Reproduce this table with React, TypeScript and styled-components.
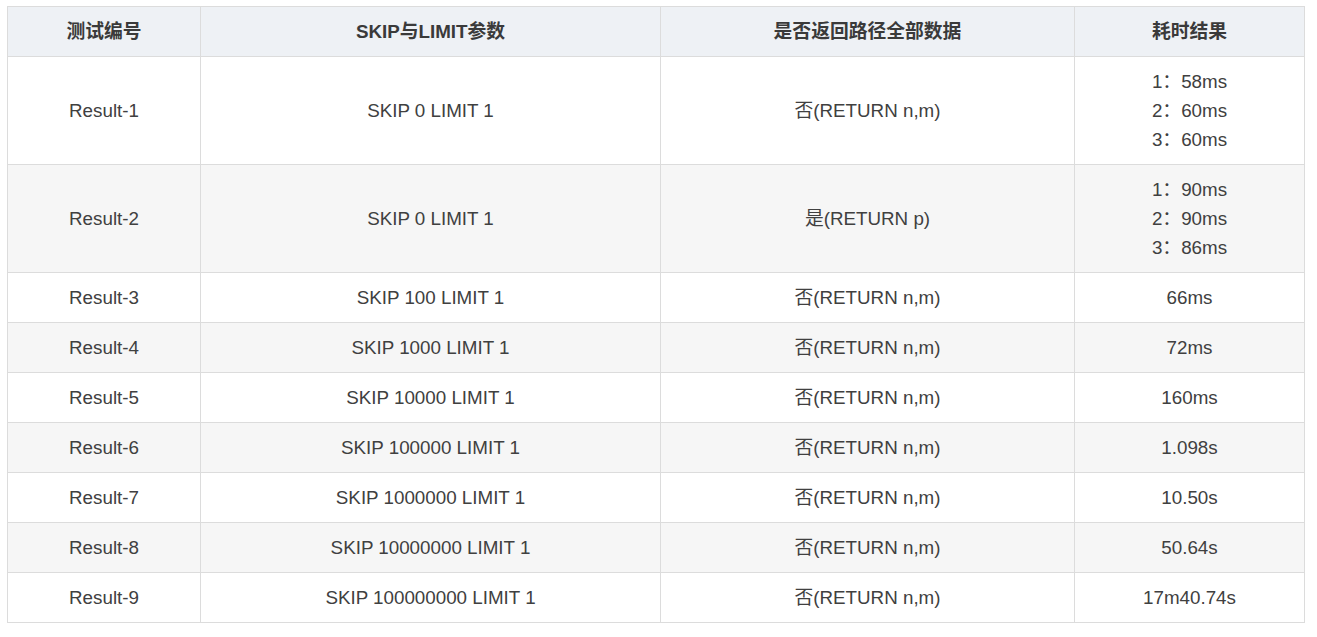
import React from 'react';
import styled, { createGlobalStyle } from 'styled-components';

const GlobalStyle = createGlobalStyle`
  body {
    margin: 0;
    background: #fff;
    font-family: "Liberation Sans", Arial, "Noto Sans CJK SC", sans-serif;
  }
`;

type Row = {
  id: string;
  params: string;
  full: string;
  times: string[];
};

const rows: Row[] = [
  { id: 'Result-1', params: 'SKIP 0 LIMIT 1', full: '否(RETURN n,m)', times: ['1：58ms', '2：60ms', '3：60ms'] },
  { id: 'Result-2', params: 'SKIP 0 LIMIT 1', full: '是(RETURN p)', times: ['1：90ms', '2：90ms', '3：86ms'] },
  { id: 'Result-3', params: 'SKIP 100 LIMIT 1', full: '否(RETURN n,m)', times: ['66ms'] },
  { id: 'Result-4', params: 'SKIP 1000 LIMIT 1', full: '否(RETURN n,m)', times: ['72ms'] },
  { id: 'Result-5', params: 'SKIP 10000 LIMIT 1', full: '否(RETURN n,m)', times: ['160ms'] },
  { id: 'Result-6', params: 'SKIP 100000 LIMIT 1', full: '否(RETURN n,m)', times: ['1.098s'] },
  { id: 'Result-7', params: 'SKIP 1000000 LIMIT 1', full: '否(RETURN n,m)', times: ['10.50s'] },
  { id: 'Result-8', params: 'SKIP 10000000 LIMIT 1', full: '否(RETURN n,m)', times: ['50.64s'] },
  { id: 'Result-9', params: 'SKIP 100000000 LIMIT 1', full: '否(RETURN n,m)', times: ['17m40.74s'] },
];

const App = () => {
  return (
    <>
      <GlobalStyle />
      <Wrapper>
        <Table>
          <colgroup>
            <col style={{ width: 193 }} />
            <col style={{ width: 460 }} />
            <col style={{ width: 414 }} />
            <col style={{ width: 230 }} />
          </colgroup>
          <thead>
            <tr>
              <Th>测试编号</Th>
              <Th>SKIP与LIMIT参数</Th>
              <Th>是否返回路径全部数据</Th>
              <Th>耗时结果</Th>
            </tr>
          </thead>
          <tbody>
            {rows.map((r, i) => (
              <Tr key={r.id} $striped={i % 2 === 1}>
                <Td>{r.id}</Td>
                <Td>{r.params}</Td>
                <Td>{r.full}</Td>
                <Td>
                  {r.times.map((t) => (
                    <Line key={t}>{t}</Line>
                  ))}
                </Td>
              </Tr>
            ))}
          </tbody>
        </Table>
      </Wrapper>
    </>
  );
};

const Wrapper = styled.div`
  padding: 6px 0 0 7px;
`;
const Table = styled.table`
  width: 1298px;
  table-layout: fixed;
  border-collapse: collapse;
  font-size: 18.8px;
  line-height: 29px;
  color: #404040;
`;
const Th = styled.th`
  background: #eef1f5;
  border: 1px solid #dcdcdc;
  padding: 10px 8px;
  font-weight: bold;
  color: #3a3a3a;
  text-align: center;
`;
const Tr = styled.tr<{ $striped: boolean }>`
  background: ${(p) => (p.$striped ? '#f6f6f6' : '#fff')};
`;
const Td = styled.td`
  border: 1px solid #dcdcdc;
  padding: 10px 8px;
  text-align: center;
  vertical-align: middle;
`;
const Line = styled.div``;

export default App;
